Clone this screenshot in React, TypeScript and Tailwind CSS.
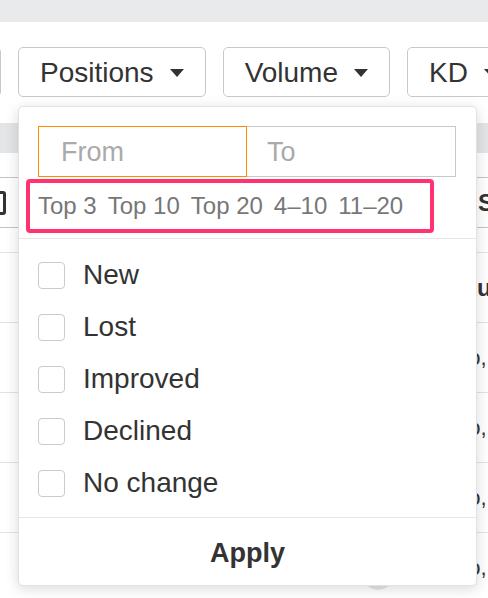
import { ChangeEvent, useState } from 'react'

const Caret = () => (
  <svg width="14" height="8" viewBox="0 0 14 8" className="shrink-0">
    <path d="M0 0h14L7 8z" fill="#333" />
  </svg>
)

const FilterButton = ({ label, className = '' }: { label: string; className?: string }) => (
  <div
    className={`h-[50px] shrink-0 flex items-center gap-4 px-[21px] pt-[2px] rounded-[5px] border border-[#c8c8c8] bg-white text-[28px] text-[#333] ${className}`}
  >
    <span>{label}</span>
    <Caret />
  </div>
)

const presets = ['Top 3', 'Top 10', 'Top 20', '4–10', '11–20']
const statuses = ['New', 'Lost', 'Improved', 'Declined', 'No change']

const PositionsDropdown = () => {
  const [from, setFrom] = useState('')
  const [to, setTo] = useState('')
  const [checked, setChecked] = useState<string[]>([])

  const toggle = (s: string) =>
    setChecked((prev) => (prev.includes(s) ? prev.filter((x) => x !== s) : [...prev, s]))

  return (
    <div className="absolute left-[18px] top-[106px] w-[459px] bg-white border border-[#e2e2e2] rounded-[5px] shadow-[0_3px_14px_rgba(0,0,0,0.15)]">
      <div className="px-[19px] pt-[19px]">
        <div className="flex">
          <input
            value={from}
            onChange={(e: ChangeEvent<HTMLInputElement>) => setFrom(e.target.value)}
            placeholder="From"
            className="w-[209px] h-[51px] px-[22px] pt-[2px] border border-[#ff8c00] outline-none text-[27px] text-[#333] placeholder:text-[#aaa]"
          />
          <input
            value={to}
            onChange={(e: ChangeEvent<HTMLInputElement>) => setTo(e.target.value)}
            placeholder="To"
            className="w-[209px] h-[51px] px-[20px] pt-[2px] border border-l-0 border-[#c8c8c8] outline-none text-[27px] text-[#333] placeholder:text-[#aaa]"
          />
        </div>

        {/* highlighted preset links */}
        <div className="-ml-3 mt-[2px] w-[408px] h-[54px] border-4 border-[#ff3370] rounded-[4px] pl-2 flex items-center gap-[11px] text-[24px] text-[#777]">
          {presets.map((p) => (
            <span key={p} className="cursor-pointer">
              {p}
            </span>
          ))}
        </div>
      </div>

      <div className="mt-[5px] border-t border-[#e6e6e6] pt-[10px] pb-[8px]">
        {statuses.map((s) => (
          <label key={s} className="h-[52px] flex items-center gap-[18px] px-[19px] cursor-pointer">
            <input
              type="checkbox"
              checked={checked.includes(s)}
              onChange={() => toggle(s)}
              className="appearance-none w-[27px] h-[27px] rounded-[4px] border-[1.5px] border-[#cbcbcb] bg-white checked:bg-[#ff8c00]"
            />
            <span className="text-[28px] text-[#333]">{s}</span>
          </label>
        ))}
      </div>

      <div className="h-[68px] pt-[4px] border-t border-[#e6e6e6] flex items-center justify-center text-[27px] font-bold text-[#333]">
        Apply
      </div>
    </div>
  )
}

const App = () => {
  return (
    <div className="relative w-[488px] h-[598px] overflow-hidden bg-white font-['Liberation_Sans',Arial,sans-serif]">
      <div className="h-[22px] bg-[#e9eaec]" />

      {/* toolbar */}
      <div className="pt-[25px] pb-[26px] flex gap-[17px] ml-[-119px]">
        <div className="w-[120px] h-[50px] shrink-0 rounded-[5px] border border-[#c8c8c8] bg-white" />
        <FilterButton label="Positions" />
        <FilterButton label="Volume" />
        <FilterButton label="KD" />
      </div>

      {/* table behind */}
      <div className="h-[30px] bg-[#e4e5e7]" />
      <div className="h-[25px] border-b border-[#c4c4c4]" />
      <div className="h-[50px] border-b border-[#c4c4c4] flex items-center whitespace-nowrap text-[24px] font-bold text-[#333]">
        <div className="ml-[-18px] w-[24px] h-[24px] rounded-[3px] border-[3px] border-[#333] shrink-0" />
        <span className="ml-[472px]">Search</span>
      </div>
      <div className="h-[25px] border-b border-[#e2e2e2]" />
      <div className="h-[70px] border-b border-[#e2e2e2] flex items-center whitespace-nowrap text-[24px] font-bold text-[#333]">
        <span className="ml-[477px]">url</span>
      </div>
      {['seo, tools', 'seo, audit', 'seo, rank', 'seo, links'].map((v, i) => (
        <div
          key={v}
          className="h-[70px] border-b border-[#e2e2e2] flex items-center whitespace-nowrap text-[22px] text-[#333] relative"
        >
          <span className="ml-[445px]">{v}</span>
          {i === 3 && (
            <div className="absolute left-[363px] top-[27px] w-[30px] h-[30px] rounded-full bg-[#e6e6e6]" />
          )}
        </div>
      ))}

      <PositionsDropdown />
    </div>
  )
}

export default App
